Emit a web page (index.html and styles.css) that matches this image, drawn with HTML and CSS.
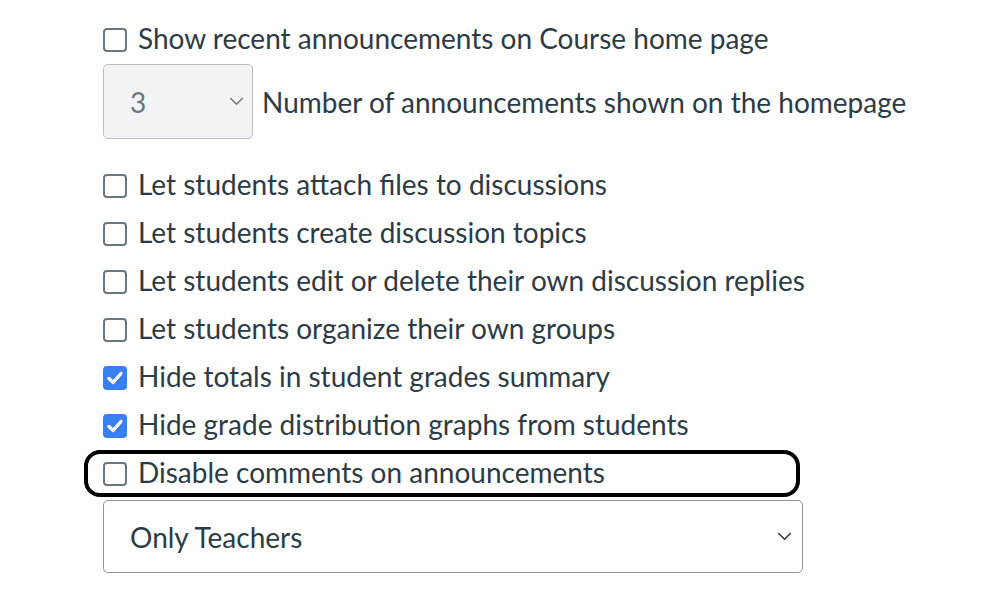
FILE: index.html
```html
<!DOCTYPE html>
<html>
<head>
<meta charset="utf-8">
<link rel="stylesheet" href="styles.css">
</head>
<body>
<div class="settings">
  <label class="row"><span class="box"></span><span class="text">Show recent announcements on Course home page</span></label>
  <div class="count-row">
    <div class="select small"><span class="val">3</span><svg class="chev" viewBox="0 0 16 10" width="15" height="9"><path d="M1 1 L8 8 L15 1" fill="none" stroke="#6b7780" stroke-width="1.6"/></svg></div>
    <span class="text">Number of announcements shown on the homepage</span>
  </div>
  <div class="list">
    <label class="row"><span class="box"></span><span class="text">Let students attach files to discussions</span></label>
    <label class="row"><span class="box"></span><span class="text">Let students create discussion topics</span></label>
    <label class="row"><span class="box"></span><span class="text">Let students edit or delete their own discussion replies</span></label>
    <label class="row"><span class="box"></span><span class="text">Let students organize their own groups</span></label>
    <label class="row"><span class="box checked"><svg viewBox="0 0 24 24" width="24" height="24"><path d="M6 12.5 L10.2 16.5 L18 7.5" fill="none" stroke="#fff" stroke-width="3.4" stroke-linecap="round" stroke-linejoin="round"/></svg></span><span class="text">Hide totals in student grades summary</span></label>
    <label class="row"><span class="box checked"><svg viewBox="0 0 24 24" width="24" height="24"><path d="M6 12.5 L10.2 16.5 L18 7.5" fill="none" stroke="#fff" stroke-width="3.4" stroke-linecap="round" stroke-linejoin="round"/></svg></span><span class="text">Hide grade distribution graphs from students</span></label>
    <label class="row focused"><span class="box"></span><span class="text">Disable comments on announcements</span></label>
  </div>
  <div class="select wide"><span class="val">Only Teachers</span><svg class="chev" viewBox="0 0 16 10" width="15" height="9"><path d="M1 1 L8 8 L15 1" fill="none" stroke="#2d3b45" stroke-width="1.6"/></svg></div>
</div>
</body>
</html>
```
FILE: styles.css
```css
html, body {
  margin: 0;
  padding: 0;
  background: #fff;
}
body {
  font-family: Lato, "Noto Sans", sans-serif;
  color: #2d3b45;
  font-size: 28px;
}
.settings {
  padding: 14px 0 0 103px;
  display: flex;
  flex-direction: column;
  align-items: flex-start;
}
.row {
  display: flex;
  align-items: center;
  gap: 11px;
  height: 48px;
  position: relative;
}
.box {
  box-sizing: border-box;
  width: 24px;
  height: 24px;
  border: 2px solid #6b7780;
  border-radius: 4px;
  flex: none;
  margin-top: 4px;
}
.box.checked {
  background: #3a7ff2;
  border-color: #3a7ff2;
  position: relative;
}
.box.checked svg {
  position: absolute;
  left: -2px;
  top: -2px;
}
.text {
  line-height: 32px;
  white-space: nowrap;
}
.count-row {
  display: flex;
  align-items: center;
  gap: 9px;
  margin-top: 2px;
  margin-bottom: 21px;
}
.select {
  box-sizing: border-box;
  display: flex;
  align-items: center;
  justify-content: space-between;
  border: 1.5px solid #b8bec4;
  border-radius: 5px;
}
.select.small {
  width: 150px;
  height: 75px;
  background: #f2f3f4;
  padding: 0 8px 0 26px;
  color: #6b7780;
}
.select.wide {
  width: 700px;
  height: 73px;
  padding: 0 10px 0 26px;
  border-color: #8b949c;
  margin-top: 4px;
}
.row.focused::before {
  content: "";
  position: absolute;
  left: -19px;
  width: 716px;
  top: 2px;
  bottom: -1px;
  box-sizing: border-box;
  border: 4px solid #000;
  border-radius: 16px;
}
```
